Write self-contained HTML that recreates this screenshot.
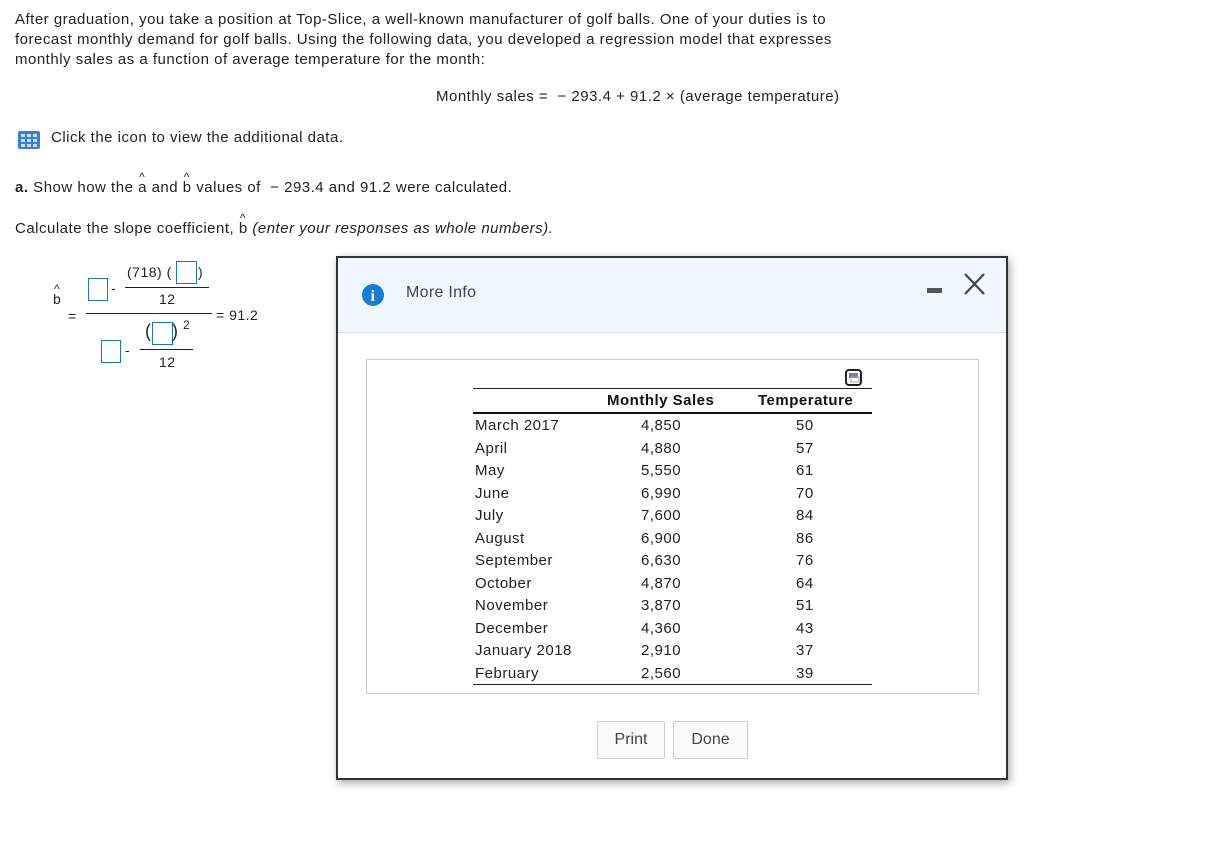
<!DOCTYPE html>
<html><head><style>
body{margin:0;width:1228px;height:862px;background:#fff;font-family:"Liberation Sans",Arial,sans-serif;font-size:15px;letter-spacing:0.5px;color:#222;position:relative;overflow:hidden}
.a{position:absolute;white-space:nowrap}
.box{position:absolute;border:1.5px solid #1a7aa0;background:#fff}
.hat{position:relative;display:inline-block}
.hat:before{content:"^";position:absolute;left:1px;top:-9px;font-size:12px}
.row{position:absolute;left:473px;width:399px;height:22px}
.row span{position:absolute}
</style></head><body>
<div class="a" style="left:15px;top:10px;line-height:20px">After graduation, you take a position at Top-Slice, a well-known manufacturer of golf balls. One of your duties is to<br>forecast monthly demand for golf balls. Using the following data, you developed a regression model that expresses<br>monthly sales as a function of average temperature for the month:</div>
<div class="a" style="left:436px;top:88px">Monthly sales = &nbsp;− 293.4 + 91.2 × (average temperature)</div>
<svg class="a" style="left:17px;top:130px" width="24" height="20" viewBox="0 0 24 20"><rect x="1" y="1" width="22" height="18" rx="2" fill="#3b7fd8"/><g fill="#cfe0f7"><rect x="4" y="4" width="4" height="3"/><rect x="10" y="4" width="4" height="3"/><rect x="16" y="4" width="4" height="3"/><rect x="4" y="9" width="4" height="3"/><rect x="10" y="9" width="4" height="3"/><rect x="16" y="9" width="4" height="3"/><rect x="4" y="14" width="4" height="3"/><rect x="10" y="14" width="4" height="3"/><rect x="16" y="14" width="4" height="3"/></g></svg>
<div class="a" style="left:51px;top:129px">Click the icon to view the additional data.</div>
<div class="a" style="left:15px;top:179px"><b>a.</b> Show how the <span class="hat">a</span> and <span class="hat">b</span> values of &nbsp;− 293.4 and 91.2 were calculated.</div>
<div class="a" style="left:15px;top:220px">Calculate the slope coefficient, <span class="hat">b</span> <i>(enter your responses as whole numbers).</i></div>
<!-- formula -->
<div class="a" style="left:53px;top:291px;font-size:14px"><span class="hat">b</span></div>
<div class="a" style="left:68px;top:308px;font-size:14px">=</div>
<div class="box" style="left:88px;top:278px;width:18px;height:21px"></div>
<div class="a" style="left:111px;top:280px;font-size:14px">-</div>
<div class="a" style="left:127px;top:264px;font-size:14px">(718) (</div>
<div class="box" style="left:176px;top:261px;width:19px;height:21px"></div>
<div class="a" style="left:198px;top:264px;font-size:14px">)</div>
<div class="a" style="left:125px;top:287px;width:84px;border-top:1.5px solid #222"></div>
<div class="a" style="left:159px;top:291px;font-size:14px">12</div>
<div class="a" style="left:86px;top:313px;width:126px;border-top:1.5px solid #222"></div>
<div class="a" style="left:216px;top:307px;font-size:14px">= 91.2</div>
<div class="box" style="left:101px;top:340px;width:18px;height:21px"></div>
<div class="a" style="left:125px;top:342px;font-size:14px">-</div>
<div class="a" style="left:145px;top:321px;font-size:18px">(</div>
<div class="box" style="left:152px;top:322px;width:19px;height:21px"></div>
<div class="a" style="left:172px;top:321px;font-size:18px">)</div>
<div class="a" style="left:183px;top:318px;font-size:12px">2</div>
<div class="a" style="left:140px;top:349px;width:53px;border-top:1.5px solid #222"></div>
<div class="a" style="left:159px;top:354px;font-size:14px">12</div>
<!-- dialog -->
<div class="a" style="left:336px;top:256px;width:668px;height:520px;border:2px solid #333;background:#fff;box-shadow:2px 3px 8px rgba(0,0,0,.35)">
<div style="position:absolute;left:0;top:0;right:0;height:74px;background:#f0f6fd;border-bottom:1px solid #cfe3f7"></div>
</div>
<svg class="a" style="left:361px;top:283px" width="24" height="24"><circle cx="12" cy="12" r="11" fill="#1a7ad4"/><text x="12" y="18" text-anchor="middle" font-family="Liberation Serif" font-weight="bold" font-size="16" fill="#fff">i</text></svg>
<div class="a" style="left:406px;top:284px;font-size:16px;color:#444;letter-spacing:0.3px">More Info</div>
<div class="a" style="left:927px;top:288px;width:15px;height:5px;background:#555"></div>
<svg class="a" style="left:963px;top:272px" width="24" height="24"><path d="M2 2L21 22M21 2L2 22" stroke="#444" stroke-width="2.2" fill="none"/></svg>
<div class="a" style="left:366px;top:359px;width:611px;height:333px;border:1px solid #ccc"></div>
<svg class="a" style="left:845px;top:369px" width="18" height="18"><rect x="1" y="1" width="15" height="15" rx="3" fill="#fff" stroke="#222" stroke-width="2"/><rect x="4" y="4" width="9" height="5" fill="#6c7fb8"/><rect x="6" y="8" width="8" height="5" fill="none" stroke="#9aa" stroke-width="1"/></svg>
<div class="a" style="left:473px;top:388px;width:399px;border-top:1.5px solid #222"></div>
<div class="a" style="left:473px;top:412px;width:399px;border-top:2px solid #111"></div>
<div class="a" style="left:473px;top:684px;width:399px;border-top:1.5px solid #222"></div>
<div class="a" style="left:607px;top:392px;font-weight:bold;color:#111">Monthly Sales</div>
<div class="a" style="left:758px;top:392px;font-weight:bold;color:#111">Temperature</div>
<div class="row" style="top:417px"><span style="left:2px">March 2017</span><span style="left:168px">4,850</span><span style="left:323px">50</span></div>
<div class="row" style="top:440px"><span style="left:2px">April</span><span style="left:168px">4,880</span><span style="left:323px">57</span></div>
<div class="row" style="top:462px"><span style="left:2px">May</span><span style="left:168px">5,550</span><span style="left:323px">61</span></div>
<div class="row" style="top:485px"><span style="left:2px">June</span><span style="left:168px">6,990</span><span style="left:323px">70</span></div>
<div class="row" style="top:507px"><span style="left:2px">July</span><span style="left:168px">7,600</span><span style="left:323px">84</span></div>
<div class="row" style="top:530px"><span style="left:2px">August</span><span style="left:168px">6,900</span><span style="left:323px">86</span></div>
<div class="row" style="top:552px"><span style="left:2px">September</span><span style="left:168px">6,630</span><span style="left:323px">76</span></div>
<div class="row" style="top:575px"><span style="left:2px">October</span><span style="left:168px">4,870</span><span style="left:323px">64</span></div>
<div class="row" style="top:597px"><span style="left:2px">November</span><span style="left:168px">3,870</span><span style="left:323px">51</span></div>
<div class="row" style="top:620px"><span style="left:2px">December</span><span style="left:168px">4,360</span><span style="left:323px">43</span></div>
<div class="row" style="top:642px"><span style="left:2px">January 2018</span><span style="left:168px">2,910</span><span style="left:323px">37</span></div>
<div class="row" style="top:665px"><span style="left:2px">February</span><span style="left:168px">2,560</span><span style="left:323px">39</span></div>
<div class="a" style="left:597px;top:721px;width:66px;height:36px;border:1px solid #ccc;border-radius:2px;background:#fafafa;text-align:center;line-height:36px;font-size:16px;color:#444;letter-spacing:0">Print</div>
<div class="a" style="left:673px;top:721px;width:73px;height:36px;border:1px solid #ccc;border-radius:2px;background:#fafafa;text-align:center;line-height:36px;font-size:16px;color:#444;letter-spacing:0">Done</div>
</body></html>
